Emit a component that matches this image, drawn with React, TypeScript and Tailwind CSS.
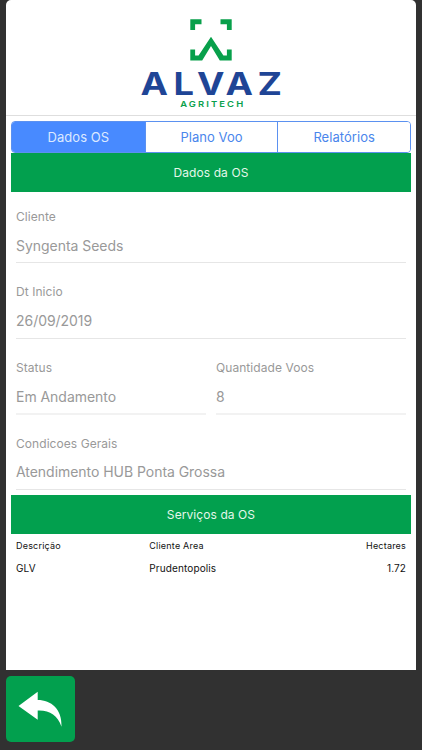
import { useState } from 'react';

interface FieldProps {
  label: string;
  value: string;
  soft?: boolean;
}

interface Service {
  description: string;
  area: string;
  hectares: string;
}

const tabs = ['Dados OS', 'Plano Voo', 'Relatórios'];

const services: Service[] = [
  { description: 'GLV', area: 'Prudentopolis', hectares: '1.72' },
];

function Logo() {
  return (
    <svg width="160" height="115" viewBox="131 0 160 115" role="img" aria-label="Alvaz Agritech">
      <g fill="#08a04b">
        <path d="M190.3 19.3h11.2v4.9h-6.4V30h-4.8z" />
        <path d="M231.7 19.3h-11.2v4.900h6.400V30h4.800z" />
        <path d="M190.3 49.600h4.800v6h3.500L211 36.800l12.400 18.800h3.500v-6h4.800v11h-11.900L211 46l-8.800 14.600h-11.900z" />
      </g>
      <g fill="#1f4596" fontFamily="Inter, sans-serif" fontSize="31.2" fontWeight="700">
        <text x="140.5" y="95" textLength="27.500" lengthAdjust="spacingAndGlyphs">A</text>
        <text x="173.5" y="95" textLength="20.500" lengthAdjust="spacingAndGlyphs">L</text>
        <text x="197" y="95" textLength="27.500" lengthAdjust="spacingAndGlyphs">V</text>
        <text x="225.500" y="95" textLength="27.500" lengthAdjust="spacingAndGlyphs">A</text>
        <text x="257.500" y="95" textLength="24.500" lengthAdjust="spacingAndGlyphs">Z</text>
      </g>
      <text
        transform="translate(180.2 107) scale(1.15 1)"
        fill="#08a04b"
        fontFamily="Inter, sans-serif"
        fontSize="8.2"
        fontWeight="600"
        textLength="54.8"
      >
        AGRITECH
      </text>
    </svg>
  );
}

function SectionTitle({ children }: { children: string }) {
  return (
    <h2 className="flex h-[39px] items-center justify-center bg-[#02a04e] pt-px text-[12px] tracking-[0.08px] text-[#e4f7ea]">
      {children}
    </h2>
  );
}

function Field({ label, value, soft }: FieldProps) {
  return (
    <div className="flex h-[75.6px] flex-1 flex-col">
      <span className="mt-[16.8px] text-[12px] leading-4 tracking-[0.06px] text-[#999]">{label}</span>
      <span className="mt-[10.8px] text-[14px] leading-5 tracking-[-0.04px] text-[#999]">{value}</span>
      <div className={soft ? 'mt-[6.4px] h-[2px] bg-[#f2f2f2]' : 'mt-[6.4px] h-px bg-[#e6e6e6]'} />
    </div>
  );
}

export default function App() {
  const [activeTab, setActiveTab] = useState(0);

  return (
    <div className="flex h-[750px] w-[422px] flex-col overflow-hidden bg-[#313131] px-[6px] font-['Inter',sans-serif]">
      <main className="h-[670px] rounded-t-[5px] bg-white">
        <header className="flex h-[116px] justify-center border-b border-[#dedede]">
          <Logo />
        </header>

        <div className="px-[5px] pt-[5px]">
          <div className="grid h-8 grid-cols-3 overflow-hidden rounded-[4px] border border-[#5b91f0]">
            {tabs.map((tab, index) => (
              <button
                key={tab}
                type="button"
                onClick={() => setActiveTab(index)}
                className={`pt-px text-[13px] tracking-[0.05px] ${index > 0 ? 'border-l border-[#5b91f0]' : ''} ${
                  index === activeTab ? 'bg-[#488aff] text-[#dce9ff]' : 'bg-white text-[#4a86ec]'
                }`}
              >
                {tab}
              </button>
            ))}
          </div>

          <SectionTitle>Dados da OS</SectionTitle>
          <div className="h-[303px] px-[5px]">
            <Field label="Cliente" value="Syngenta Seeds" />
            <Field label="Dt Inicio" value="26/09/2019" />
            <div className="flex gap-[10px]">
              <Field label="Status" value="Em Andamento" soft />
              <Field label="Quantidade Voos" value="8" soft />
            </div>
            <Field label="Condicoes Gerais" value="Atendimento HUB Ponta Grossa" />
          </div>

          <SectionTitle>Serviços da OS</SectionTitle>
          <table className="w-full table-fixed text-left text-[#111]">
            <thead>
              <tr className="h-[23px] text-[9px] tracking-[0.2px]">
                <th className="w-1/3 pl-[5px] font-normal">Descrição</th>
                <th className="w-1/3 pl-[5px] font-normal">Cliente Area</th>
                <th className="w-1/3 pr-[5px] text-right font-normal">Hectares</th>
              </tr>
            </thead>
            <tbody>
              {services.map((service) => (
                <tr key={service.description} className="h-[23px] text-[10px] tracking-[0.12px]">
                  <td className="pl-[5px]">{service.description}</td>
                  <td className="pl-[5px]">{service.area}</td>
                  <td className="pr-[5px] text-right">{service.hectares}</td>
                </tr>
              ))}
            </tbody>
          </table>
        </div>
      </main>

      <button
        type="button"
        aria-label="Voltar"
        className="mt-[6px] flex h-[66px] w-[69px] items-center justify-center rounded-[5px] bg-[#02a04e]"
      >
        <svg width="69" height="66" viewBox="0 0 69 66" fill="white">
          <path d="M12.5 30 31.7 15.7v8.200c13.500 0 24.500 9 23.800 26.800C51.500 39 43.500 34 31.700 34.500v9.200z" />
        </svg>
      </button>
    </div>
  );
}
